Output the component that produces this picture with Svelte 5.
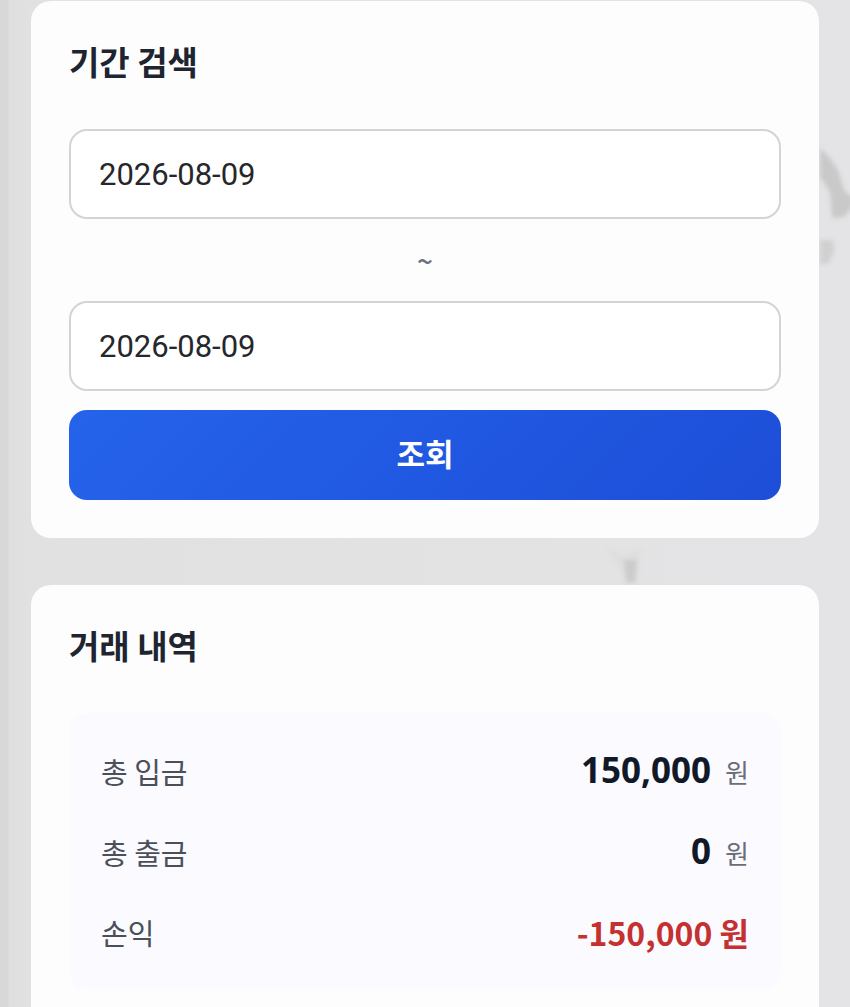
<script>
    let startDate = $state('2026-08-09');
    let endDate = $state('2026-08-09');

    const totals = [
        { label: '총 입금', amount: 150000 },
        { label: '총 출금', amount: 0 },
    ];
    const profit = -150000;

    const format = (value) => value.toLocaleString('en-US');

    function search(event) {
        event.preventDefault();
    }
</script>

<main class="page">
    <!-- faded paper stains behind the cards -->
    <svg class="stain stain-right" width="40" height="150" viewBox="0 0 40 150" aria-hidden="true">
        <path d="M4 16 L14 26 L22 38 L28 58 L40 68 L36 76 L28 85 L16 86 L14 60 L4 45 Z" fill="#c9c9ca" />
        <path d="M4 108 L17 108 L18 120 L12 132 L4 132 Z" fill="#d0d0d1" />
    </svg>
    <svg class="stain stain-middle" width="60" height="50" viewBox="0 0 60 50" aria-hidden="true">
        <path d="M12 8 L30 16 L46 8 L42 42 L33 42 Z" fill="#dedede" />
        <path d="M29 20 L42 20 L40 43 L31 43 Z" fill="#cccccc" />
    </svg>

    <section class="card">
        <h2>기간 검색</h2>
        <form onsubmit={search}>
            <input type="text" aria-label="시작일" bind:value={startDate} />
            <span class="tilde">~</span>
            <input type="text" aria-label="종료일" bind:value={endDate} />
            <button type="submit">조회</button>
        </form>
    </section>

    <section class="card">
        <h2>거래 내역</h2>
        <dl class="summary">
            {#each totals as total}
                <div class="row">
                    <dt>{total.label}</dt>
                    <dd><strong>{format(total.amount)}</strong><span class="unit">원</span></dd>
                </div>
            {/each}
            <div class="row">
                <dt>손익</dt>
                <dd class="loss">{format(profit)} 원</dd>
            </div>
        </dl>
    </section>
</main>

<style>
    :global(body) {
        background: #e2e2e3;
    }

    .page {
        position: relative;
        display: flex;
        flex-direction: column;
        gap: 47px;
        min-height: 100vh;
        box-sizing: border-box;
        padding: 1px 31px 0;
        overflow: hidden;
        background: linear-gradient(to right, #d8d8d8 8px, #dfdfdf 9px, #e1e1e1 30px, #e4e4e6);
        font-family: "Noto Sans CJK KR", sans-serif;
    }

    .stain {
        position: absolute;
        filter: blur(2px);
    }

    .stain-right {
        top: 132px;
        right: -6px;
    }

    .stain-middle {
        top: 540px;
        left: 70%;
    }

    .card {
        position: relative;
        padding: 38px;
        border-radius: 20px;
        background: #fdfdfe;
    }

    h2 {
        margin: 0 0 46px;
        font-size: 33px;
        font-weight: 700;
        line-height: 44px;
        color: #1f2530;
    }

    form {
        display: flex;
        flex-direction: column;
    }

    input {
        box-sizing: border-box;
        width: 100%;
        height: 90px;
        padding: 0 28px;
        border: 2px solid #d3d4d8;
        border-radius: 18px;
        background: #fff;
        font-family: Roboto, sans-serif;
        font-size: 31px;
        color: #26272b;
    }

    .tilde {
        padding: 21px 0;
        font-size: 28px;
        font-weight: 500;
        line-height: 40px;
        text-align: center;
        color: #6b7280;
    }

    button {
        height: 90px;
        margin-top: 19px;
        padding: 0 0 5px;
        border: 0;
        border-radius: 18px;
        background: linear-gradient(135deg, #2563eb, #1d4ed8);
        font-family: inherit;
        font-size: 31px;
        font-weight: 700;
        color: #fff;
        cursor: pointer;
    }

    .summary {
        display: flex;
        flex-direction: column;
        gap: 31px;
        margin: 0;
        padding: 33px 32px;
        border-radius: 18px;
        background: #fafaff;
    }

    .row {
        display: flex;
        align-items: center;
        justify-content: space-between;
        line-height: 48px;
    }

    dt {
        font-size: 29px;
        color: #4b5058;
    }

    dd {
        display: flex;
        align-items: baseline;
        margin: 0;
    }

    strong {
        font-family: "Noto Sans", sans-serif;
        font-size: 35px;
        font-weight: 700;
        color: #111827;
    }

    .unit {
        margin-left: 14px;
        font-size: 26px;
        color: #6b6e76;
    }

    .loss {
        font-size: 32px;
        font-weight: 700;
        color: #c53030;
    }
</style>
